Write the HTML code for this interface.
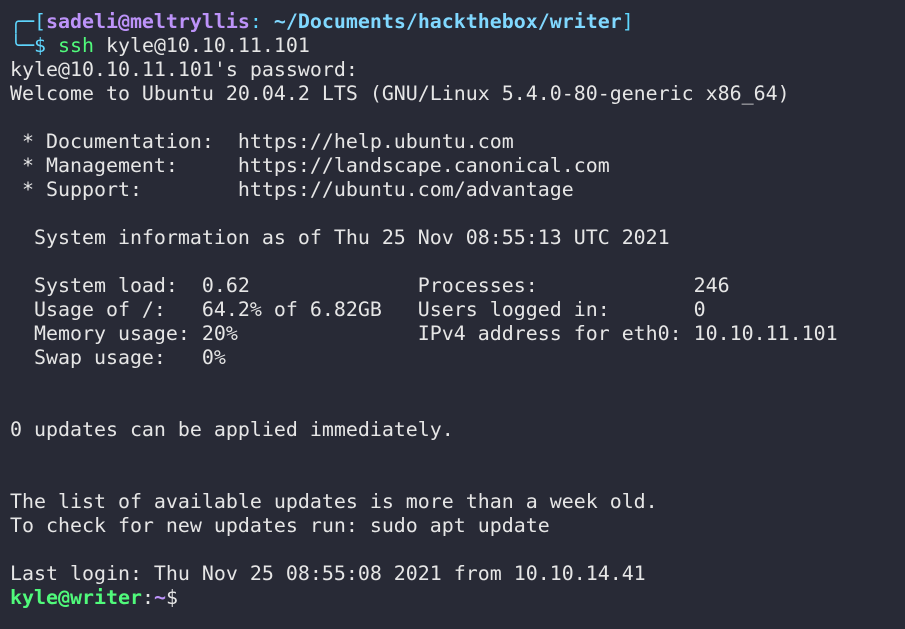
<!DOCTYPE html>
<html><head><meta charset="utf-8"><style>
html,body{margin:0;padding:0;background:#282a36;width:905px;height:629px;overflow:hidden}
pre{margin:0;position:absolute;left:10px;top:10px;font-family:"DejaVu Sans Mono","Liberation Mono",monospace;font-size:19.93px;line-height:24px;color:#e6e6e6}
.c{color:#5fd7ff}.p{color:#bd93f9;font-weight:bold}.cb{color:#80d8ff;font-weight:bold}.g{color:#50fa7b}.gb{color:#50fa7b;font-weight:bold}.pp{color:#bd93f9;font-weight:bold}
</style></head><body><pre><span class="c">╭─[</span><span class="p">sadeli@meltryllis</span><span class="c">: </span><span class="cb">~/Documents/hackthebox/writer</span><span class="c">]</span>
<span class="c">╰─$</span> <span class="g">ssh</span> kyle@10.10.11.101
kyle@10.10.11.101's password:
Welcome to Ubuntu 20.04.2 LTS (GNU/Linux 5.4.0-80-generic x86_64)

 * Documentation:  https://help.ubuntu.com
 * Management:     https://landscape.canonical.com
 * Support:        https://ubuntu.com/advantage

  System information as of Thu 25 Nov 08:55:13 UTC 2021

  System load:  0.62              Processes:             246
  Usage of /:   64.2% of 6.82GB   Users logged in:       0
  Memory usage: 20%               IPv4 address for eth0: 10.10.11.101
  Swap usage:   0%


0 updates can be applied immediately.


The list of available updates is more than a week old.
To check for new updates run: sudo apt update

Last login: Thu Nov 25 08:55:08 2021 from 10.10.14.41
<span class="gb">kyle@writer</span>:<span class="pp">~</span>$</pre></body></html>
